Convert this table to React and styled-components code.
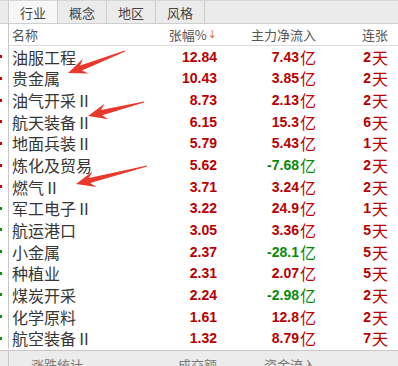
import React from 'react';
import styled, { createGlobalStyle } from 'styled-components';

const GlobalStyle = createGlobalStyle`
  html, body {
    margin: 0;
    padding: 0;
    background: #ffffff;
    overflow: hidden;
  }
  body {
    font-family: "Liberation Sans", "Noto Sans CJK SC", sans-serif;
  }
`;

const CJK = '"Noto Sans CJK SC", "Liberation Sans", sans-serif';
const NUM = '"Liberation Sans", "Noto Sans CJK SC", sans-serif';

const Panel = styled.div`
  position: relative;
  width: 398px;
  height: 366px;
  overflow: hidden;
  background: #fff;
`;

const TabBar = styled.div`
  display: flex;
  height: 24px;
  box-sizing: border-box;
  background: #ebebeb;
  border-top: 1px solid #d6d6d6;
  border-bottom: 1px solid #cfcfcf;
  padding-left: 8px;
`;

const Tab = styled.div`
  width: 48px;
  display: flex;
  align-items: center;
  justify-content: center;
  border-left: 1px solid #cdcdcd;
  background: ${p => (p.$active ? '#f7f7f7' : '#ebebeb')};
  color: #444;
  font-family: ${CJK};
  font-size: 13px;
  line-height: 1;
  &:last-child {
    border-right: 1px solid #cdcdcd;
  }
`;

const Grid = styled.div`
  display: grid;
  grid-template-columns: 9px 141px 69px 99px 72px 8px;
`;

const Strip = styled.div`
  border-right: 1px solid #c8c8c8;
  box-sizing: border-box;
  display: flex;
  align-items: center;
`;

const Mark = styled.span`
  width: 2px;
  height: 3px;
  background: ${p => p.$c};
`;

const HeadCell = styled.div`
  height: 21px;
  border-bottom: 1px solid #dcdcdc;
  display: flex;
  align-items: center;
  justify-content: ${p => (p.$left ? 'flex-start' : 'flex-end')};
  padding: ${p => (p.$left ? '0 0 0 3px' : '0 2px 0 0')};
  color: #555;
  font-family: ${CJK};
  font-size: 13px;
  line-height: 1;
`;

const SortArrow = styled.span`
  color: #e0701e;
  font-family: "DejaVu Sans", sans-serif;
  font-size: 11px;
  margin-left: 1px;
`;

const Cell = styled.div`
  height: 21.65px;
  display: flex;
  align-items: center;
  justify-content: ${p => (p.$left ? 'flex-start' : 'flex-end')};
  padding: ${p => (p.$left ? '0 0 0 3px' : '0 2px 0 0')};
  white-space: nowrap;
  line-height: 1;
`;

const Name = styled.span`
  font-family: ${CJK};
  font-size: 16px;
  color: #363636;
`;

const Num = styled.span`
  font-family: ${NUM};
  font-weight: bold;
  font-size: 14px;
  color: ${p => p.$c};
`;

const Unit = styled.span`
  font-family: ${CJK};
  font-size: 16px;
  color: ${p => p.$c};
  margin-left: 1px;
`;

const Footer = styled.div`
  border-top: 1px solid #c8c8c8;
  background: #ececec;
  height: 40px;
  margin-top: 1px;
`;

const FootText = styled.div`
  padding: 7px 2px 0 ${p => p.$pl || '0'};
  font-family: ${CJK};
  font-size: 13px;
  line-height: 1;
  color: #777;
  text-align: ${p => p.$align || 'left'};
`;

const Overlay = styled.svg`
  position: absolute;
  left: 0;
  top: 0;
  pointer-events: none;
`;

const RED = '#b80000';
const GREEN = '#078a07';

const rows = [
  ['油服工程', '12.84', '7.43', '2'],
  ['贵金属', '10.43', '3.85', '2'],
  ['油气开采Ⅱ', '8.73', '2.13', '2'],
  ['航天装备Ⅱ', '6.15', '15.3', '6'],
  ['地面兵装Ⅱ', '5.79', '5.43', '1'],
  ['炼化及贸易', '5.62', '-7.68', '2'],
  ['燃气Ⅱ', '3.71', '3.24', '2'],
  ['军工电子Ⅱ', '3.22', '24.9', '1'],
  ['航运港口', '3.05', '3.36', '5'],
  ['小金属', '2.37', '-28.1', '5'],
  ['种植业', '2.31', '2.07', '5'],
  ['煤炭开采', '2.24', '-2.98', '2'],
  ['化学原料', '1.61', '12.8', '2'],
  ['航空装备Ⅱ', '1.32', '8.79', '7'],
];

const arrows = [
  [125, 51, 68, 73],
  [144, 102, 88, 116],
  [147, 166, 76, 184],
];

const Arrow = ({ tail, tip }) => {
  const dx = tail[0] - tip[0];
  const dy = tail[1] - tip[1];
  const len = Math.hypot(dx, dy);
  const ang = (Math.atan2(dy, dx) * 180) / Math.PI;
  const pts = [
    [0, 0],
    [19, 8],
    [14, 2.6],
    [len, 0.6],
    [len, -0.6],
    [14, -2.6],
    [19, -8],
  ]
    .map(p => p.join(','))
    .join(' ');
  return (
    <g transform={`translate(${tip[0]} ${tip[1]}) rotate(${ang})`}>
      <polygon points={pts} fill="#e83a2c" />
    </g>
  );
};

export default function App() {
  return (
    <>
      <GlobalStyle />
      <Panel>
        <TabBar>
          <Tab $active>行业</Tab>
          <Tab>概念</Tab>
          <Tab>地区</Tab>
          <Tab>风格</Tab>
        </TabBar>
        <Grid>
          <Strip />
          <HeadCell $left>名称</HeadCell>
          <HeadCell>
            张幅%<SortArrow>↓</SortArrow>
          </HeadCell>
          <HeadCell>主力净流入</HeadCell>
          <HeadCell>连张</HeadCell>
          <HeadCell />
          {rows.map(([name, pct, flow, days], i) => {
            const flowColor = flow.startsWith('-') ? GREEN : RED;
            return (
              <React.Fragment key={i}>
                <Strip>
                  <Mark $c={i < 7 ? '#d00000' : '#109010'} />
                </Strip>
                <Cell $left>
                  <Name>{name}</Name>
                </Cell>
                <Cell>
                  <Num $c={RED}>{pct}</Num>
                </Cell>
                <Cell>
                  <Num $c={flowColor}>{flow}</Num>
                  <Unit $c={flowColor}>亿</Unit>
                </Cell>
                <Cell>
                  <Num $c={RED}>{days}</Num>
                  <Unit $c={RED}>天</Unit>
                </Cell>
                <Cell />
              </React.Fragment>
            );
          })}
        </Grid>
        <Footer>
          <Grid>
            <Strip style={{ height: 40 }} />
            <FootText $pl="22px">涨跌统计</FootText>
            <FootText $align="right">成交额</FootText>
            <FootText $align="right">资金流入</FootText>
            <FootText />
            <FootText />
          </Grid>
        </Footer>
        <Overlay width="398" height="366" viewBox="0 0 398 366">
          {arrows.map(([x1, y1, x2, y2], i) => (
            <Arrow key={i} tail={[x1, y1]} tip={[x2, y2]} />
          ))}
        </Overlay>
      </Panel>
    </>
  );
}
